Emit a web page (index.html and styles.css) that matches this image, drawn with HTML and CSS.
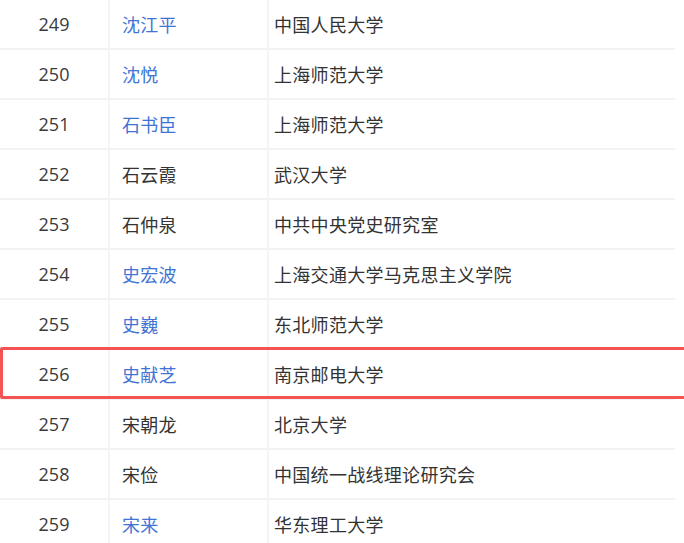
FILE: index.html
```html
<!DOCTYPE html>
<html lang="zh-CN">
<head>
  <meta charset="UTF-8" />
  <title>名单</title>
  <link rel="stylesheet" href="styles.css">
</head>
<body>
  <div class="list">
    <div class="row"><span class="no">249</span><span class="name"><a href="#">沈江平</a></span><span class="unit">中国人民大学</span></div>
    <div class="row"><span class="no">250</span><span class="name"><a href="#">沈悦</a></span><span class="unit">上海师范大学</span></div>
    <div class="row"><span class="no">251</span><span class="name"><a href="#">石书臣</a></span><span class="unit">上海师范大学</span></div>
    <div class="row"><span class="no">252</span><span class="name">石云霞</span><span class="unit">武汉大学</span></div>
    <div class="row"><span class="no">253</span><span class="name">石仲泉</span><span class="unit">中共中央党史研究室</span></div>
    <div class="row"><span class="no">254</span><span class="name"><a href="#">史宏波</a></span><span class="unit">上海交通大学马克思主义学院</span></div>
    <div class="row"><span class="no">255</span><span class="name"><a href="#">史巍</a></span><span class="unit">东北师范大学</span></div>
    <div class="row marked"><span class="no">256</span><span class="name"><a href="#">史献芝</a></span><span class="unit">南京邮电大学</span></div>
    <div class="row"><span class="no">257</span><span class="name">宋朝龙</span><span class="unit">北京大学</span></div>
    <div class="row"><span class="no">258</span><span class="name">宋俭</span><span class="unit">中国统一战线理论研究会</span></div>
    <div class="row"><span class="no">259</span><span class="name"><a href="#">宋来</a></span><span class="unit">华东理工大学</span></div>
  </div>
</body>
</html>
```

FILE: styles.css
```css
* {
  box-sizing: border-box;
  margin: 0;
  padding: 0;
}

body {
  font-family: "Noto Sans CJK SC", "Noto Sans", sans-serif;
  background: #fff;
  color: #333;
  overflow: hidden;
}

.list {
  width: 675px;
  margin-top: -2px;
  font-size: 18px;
  letter-spacing: 0.3px;
}

.row {
  display: grid;
  grid-template-columns: 108px 159px 1fr;
  height: 50px;
  border-top: 2px solid #f2f2f2;
}

.row > span {
  display: flex;
  align-items: center;
  white-space: nowrap;
}

.no {
  justify-content: center;
  font-family: "Open Sans", "Noto Sans CJK SC", sans-serif;
  letter-spacing: 0;
  color: #3a3a3a;
}

.name {
  padding-left: 12px;
  border-left: 2px solid #f4f4f4;
}

.unit {
  padding-left: 5px;
  border-left: 2px solid #f4f4f4;
}

.name a {
  color: #3f74d6;
  text-decoration: none;
}

.marked {
  position: relative;
}

/* red annotation box over the row */
.marked::after {
  content: '';
  position: absolute;
  top: -3px;
  left: 0;
  width: 684px;
  height: 46px;
  border: 3px solid #f55353;
  border-radius: 2px;
  pointer-events: none;
}
```
